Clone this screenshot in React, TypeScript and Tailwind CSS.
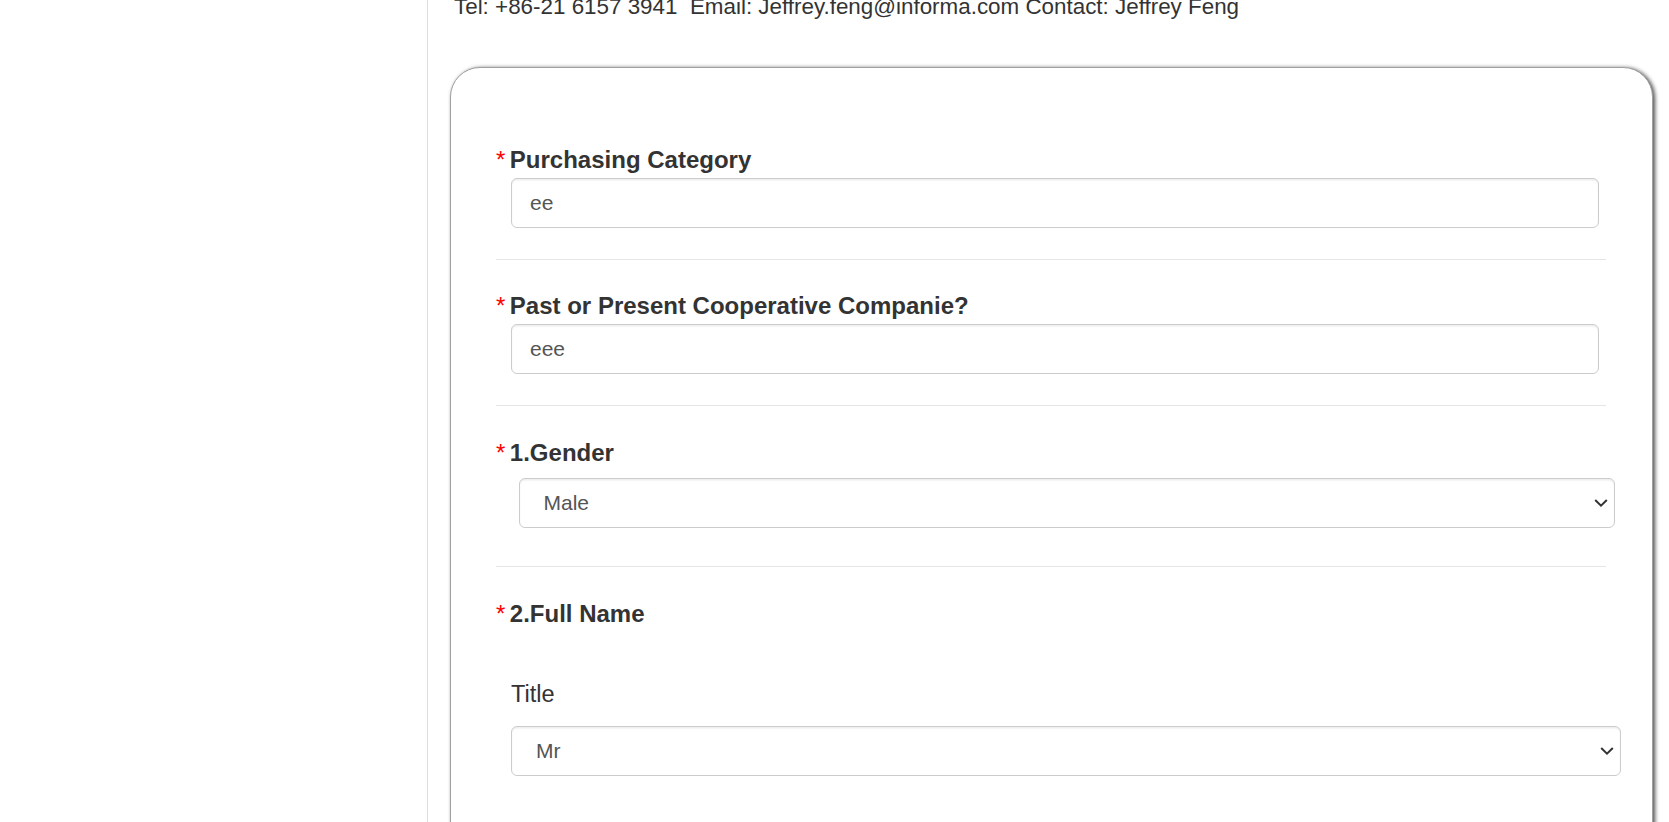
import React from 'react'

function Chevron() {
  return (
    <svg
      className="pointer-events-none absolute right-[7px] top-1/2 -translate-y-1/2"
      width="14"
      height="9"
      viewBox="0 0 14 9"
      fill="none"
    >
      <path d="M1.2 1.5l5.8 5.6 5.8-5.6" stroke="#333" strokeWidth="2" />
    </svg>
  )
}

function Label({ text }: { text: string }) {
  return (
    <div className="flex items-start text-[24px] leading-[34px]">
      <span className="mr-[4.5px] text-[#f00]">*</span>
      <span className="font-bold text-[#333]">{text}</span>
    </div>
  )
}

function TextField({ value }: { value: string }) {
  return (
    <input
      type="text"
      readOnly
      value={value}
      className="ml-[15px] mt-[1px] block h-[50px] w-[1088px] rounded-[6px] border border-[#ccc] bg-white px-[18px] text-[21px] text-[#555] shadow-[inset_0_1.5px_1.5px_rgba(0,0,0,0.075)] outline-none"
    />
  )
}

function SelectField({ value, options, className }: { value: string; options: string[]; className: string }) {
  return (
    <div className={`relative ${className}`}>
      <select
        defaultValue={value}
        className="block h-[50px] w-full appearance-none rounded-[6px] border border-[#ccc] bg-white pl-[24px] pr-[30px] text-[21px] text-[#555] shadow-[inset_0_1.5px_1.5px_rgba(0,0,0,0.075)] outline-none"
      >
        {options.map((o) => (
          <option key={o}>{o}</option>
        ))}
      </select>
      <Chevron />
    </div>
  )
}

export default function App() {
  return (
    <div className="flex min-h-screen bg-white font-['Liberation_Sans',Arial,sans-serif] text-[#333]">
      <aside className="w-[428px] shrink-0 border-r border-[#ddd]" />
      <main className="flex-1 overflow-hidden pl-[22px]">
        <p className="-mt-[9px] whitespace-pre pl-[4px] text-[22.4px] leading-[32px] text-[#333]">
          Tel: +86-21 6157 3941{'\u00a0'} Email: Jeffrey.feng@informa.com Contact: Jeffrey Feng
        </p>

        <div className="mt-[44px] w-[1203px] rounded-[30px] border border-[#a0a0a0] bg-white pb-[120px] pl-[45px] pr-[46px] pt-[75px] shadow-[2px_1px_4px_rgba(0,0,0,0.7)]">
          <div className="border-b border-[#e5e5e5] pb-[31px]">
            <Label text="Purchasing Category" />
            <TextField value="ee" />
          </div>

          <div className="border-b border-[#e5e5e5] pb-[31px] pt-[29px]">
            <Label text="Past or Present Cooperative Companie?" />
            <TextField value="eee" />
          </div>

          <div className="border-b border-[#e5e5e5] pb-[30px] pt-[30px]">
            <Label text="1.Gender" />
            <SelectField value="Male" options={['Male', 'Female']} className="mb-[8px] ml-[22.5px] mt-[8px] w-[1096px]" />
          </div>

          <div className="pt-[30px]">
            <Label text="2.Full Name" />
            <div className="ml-[15px] mt-[47px] text-[23.5px] leading-[32px] text-[#333]">Title</div>
            <SelectField value="Mr" options={['Mr', 'Ms', 'Mrs', 'Dr']} className="ml-[15px] mt-[16px] w-[1110px]" />
          </div>
        </div>
      </main>
    </div>
  )
}
